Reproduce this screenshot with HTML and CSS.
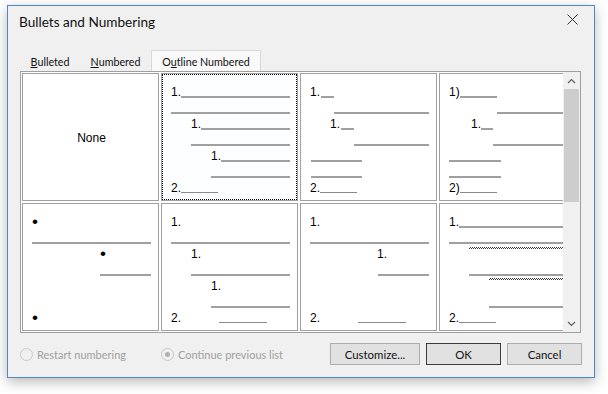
FILE: index.html
```html
<!DOCTYPE html>
<html>
<head>
<meta charset="utf-8">
<title>Bullets and Numbering</title>
<link rel="stylesheet" href="styles.css">
</head>
<body>
<div class="dialog">
  <div class="titlebar">
    <span class="title">Bullets and Numbering</span>
    <svg class="close" width="11" height="11" viewBox="0 0 11 11"><path d="M0.5 0.5 L10.5 10.5 M10.5 0.5 L0.5 10.5" stroke="#333" stroke-width="1" fill="none"/></svg>
  </div>
  <div class="tabs">
    <div class="tab t1"><u>B</u>ulleted</div>
    <div class="tab t2"><u>N</u>umbered</div>
    <div class="tab t3 active">O<u>u</u>tline Numbered</div>
  </div>
  <div class="panel">
    <div class="gallery">
      <div class="grid">
        <!-- row 1 -->
        <div class="cell none"><span class="none-text">None</span></div>
        <div class="cell selected">
          <div class="row"><span class="lbl">1.</span><span class="ln fill"></span></div>
          <div class="row"><span class="ln fill"></span></div>
          <div class="row i20"><span class="lbl">1.</span><span class="ln fill"></span></div>
          <div class="row i20"><span class="ln fill"></span></div>
          <div class="row i40"><span class="lbl">1.</span><span class="ln fill"></span></div>
          <div class="row i40"><span class="ln fill"></span></div>
          <div class="row"><span class="lbl">2.</span><span class="ln thin w37"></span></div>
        </div>
        <div class="cell">
          <div class="row"><span class="lbl">1.</span><span class="ln w13 ml1"></span></div>
          <div class="row i24"><span class="ln fill"></span></div>
          <div class="row i20"><span class="lbl">1.</span><span class="ln w13 ml1"></span></div>
          <div class="row i44"><span class="ln fill"></span></div>
          <div class="row i1"><span class="ln w51"></span></div>
          <div class="row i1"><span class="ln w51"></span></div>
          <div class="row"><span class="lbl">2.</span><span class="ln thin w37"></span></div>
        </div>
        <div class="cell">
          <div class="row"><span class="lbl">1)</span><span class="ln w37"></span></div>
          <div class="row i48"><span class="ln fill"></span></div>
          <div class="row i22"><span class="lbl">1.</span><span class="ln w12"></span></div>
          <div class="row i44"><span class="ln fill"></span></div>
          <div class="row"><span class="ln w52"></span></div>
          <div class="row"><span class="ln w52"></span></div>
          <div class="row"><span class="lbl">2)</span><span class="ln thin w37"></span></div>
        </div>
        <!-- row 2 -->
        <div class="cell">
          <div class="row"><span class="lbl bul">•</span></div>
          <div class="row"><span class="ln fill"></span></div>
          <div class="row i68"><span class="lbl bul">•</span></div>
          <div class="row i68"><span class="ln fill"></span></div>
          <div class="row"></div>
          <div class="row"></div>
          <div class="row"><span class="lbl bul">•</span></div>
        </div>
        <div class="cell">
          <div class="row"><span class="lbl">1.</span></div>
          <div class="row"><span class="ln fill"></span></div>
          <div class="row i20"><span class="lbl">1.</span></div>
          <div class="row i20"><span class="ln fill"></span></div>
          <div class="row i40"><span class="lbl">1.</span></div>
          <div class="row i40"><span class="ln fill"></span></div>
          <div class="row"><span class="lbl">2.</span><span class="ln thin w48 ml38"></span></div>
        </div>
        <div class="cell">
          <div class="row"><span class="lbl">1.</span></div>
          <div class="row"><span class="ln fill"></span></div>
          <div class="row i67"><span class="lbl">1.</span></div>
          <div class="row i68"><span class="ln fill"></span></div>
          <div class="row"></div>
          <div class="row"></div>
          <div class="row"><span class="lbl">2.</span><span class="ln thin w48 ml38"></span></div>
        </div>
        <div class="cell">
          <div class="row"><span class="lbl">1.</span><span class="ln fill"></span></div>
          <div class="row"><span class="ln fill"></span></div>
          <div class="row h5 i20"><span class="ln hatch fill"></span></div>
          <div class="row h11"></div>
          <div class="row i20"><span class="ln fill"></span></div>
          <div class="row h4 i40"><span class="ln hatch fill"></span></div>
          <div class="row h12"></div>
          <div class="row i40"><span class="ln fill"></span></div>
          <div class="row"><span class="lbl">2.</span><span class="ln thin w37"></span></div>
        </div>
      </div>
    </div>
    <div class="scrollbar">
      <div class="sb-btn"><svg width="9" height="6" viewBox="0 0 9 6"><path d="M1 5 L4.5 1.5 L8 5" stroke="#606060" stroke-width="1.2" fill="none"/></svg></div>
      <div class="sb-track"><div class="sb-thumb"></div></div>
      <div class="sb-btn"><svg width="9" height="6" viewBox="0 0 9 6"><path d="M1 1 L4.5 4.5 L8 1" stroke="#606060" stroke-width="1.2" fill="none"/></svg></div>
    </div>
  </div>
  <div class="footer">
    <div class="radio r1"><span class="circle"></span><span class="rlabel">Restart numbering</span></div>
    <div class="radio r2"><span class="circle checked"></span><span class="rlabel">Continue previous list</span></div>
    <button class="btn customize">Customize...</button>
    <button class="btn ok">OK</button>
    <button class="btn cancel">Cancel</button>
  </div>
</div>
</body>
</html>
```

FILE: styles.css
```css
html, body {
  margin: 0;
  padding: 0;
  background: #ffffff;
}

body {
  width: 608px;
  height: 394px;
  overflow: hidden;
  font-family: "Lato", "Liberation Sans", sans-serif;
}

.dialog {
  margin: 5px 0 0 7px;
  width: 586px;
  height: 371px;
  border: 1px solid #4a8bc6;
  background: #f0f0f0;
  box-shadow: 0 4px 12px rgba(0, 0, 0, 0.28);
  display: flex;
  flex-direction: column;
}

.titlebar {
  height: 30px;
  display: flex;
  align-items: center;
  padding: 0 16px 0 11px;
}

.title {
  flex: 1;
  font-size: 13.6px;
  color: #111;
  padding-top: 1px;
}

.close {
  display: block;
  margin-top: -3px;
}

.tabs {
  margin: 14px 0 0 12px;
  height: 21px;
  display: flex;
  align-items: stretch;
}

.tab {
  font-size: 10.7px;
  color: #111;
  display: flex;
  align-items: center;
  justify-content: center;
  box-sizing: border-box;
  padding-top: 1px;
}

.tab u {
  text-underline-offset: 1px;
}

.t1 { width: 60px; }
.t2 { width: 71px; }
.t3 { width: 110px; }

.tab.active {
  border: 1px solid #d9d9d9;
  border-bottom: none;
  background: #f9f9f9;
}

.panel {
  margin: 0 13px 0 12px;
  height: 262px;
  box-sizing: border-box;
  border: 1px solid #a0a0a0;
  background: #ffffff;
  display: flex;
}

.gallery {
  flex: 1;
  overflow: hidden;
  padding: 1px 0 0 1px;
}

.grid {
  display: grid;
  grid-template-columns: repeat(4, 137px);
  grid-template-rows: repeat(2, 128px);
  gap: 2px;
}

.cell {
  box-sizing: border-box;
  border: 1px solid #a0a0a0;
  padding: 9px 7px 0 9px;
  background: #ffffff;
  overflow: hidden;
}

.cell.selected {
  outline: 1px dotted #000;
  outline-offset: -2px;
  background: #fdfeff;
}

.cell.none {
  display: flex;
  align-items: center;
  justify-content: center;
  padding: 1px 0 0 2px;
}

.none-text {
  font-family: "Liberation Sans", Arial, sans-serif;
  font-size: 12px;
  color: #000;
}

.row {
  height: 16px;
  display: flex;
  align-items: flex-end;
}

.row.h4 { height: 4px; }
.row.h5 { height: 5px; }
.row.h11 { height: 11px; }
.row.h12 { height: 12px; }

.i1 { padding-left: 1px; }
.i20 { padding-left: 20px; }
.i22 { padding-left: 22px; }
.i24 { padding-left: 24px; }
.i40 { padding-left: 40px; }
.i44 { padding-left: 44px; }
.i48 { padding-left: 48px; }
.i67 { padding-left: 67px; }
.i68 { padding-left: 68px; }

.lbl {
  font-family: "Liberation Sans", Arial, sans-serif;
  font-size: 12px;
  line-height: 12px;
  color: #000;
  margin-bottom: 1px;
  white-space: pre;
}

.lbl.bul {
  font-size: 17px;
  line-height: 14px;
  margin-bottom: 0;
}

.ln {
  display: block;
  height: 2px;
  background: #a0a0a0;
  margin-bottom: 1px;
}

.ln.fill { flex: 1; }
.ln.thin {
  height: 1px;
  background: #8a8a8a;
  margin-bottom: 2px;
}

.ln.hatch {
  background: repeating-conic-gradient(#3a3a3a 0 25%, #ffffff 0 50%) 0 0 / 2px 2px;
}

.w12 { width: 12px; }
.w13 { width: 13px; }
.w37 { width: 37px; }
.w48 { width: 48px; }
.w51 { width: 51px; }
.w52 { width: 52px; }
.ml1 { margin-left: 1px; }
.ml38 { margin-left: 38px; }

.scrollbar {
  width: 17px;
  background: #f0f0f0;
  display: flex;
  flex-direction: column;
}

.sb-btn {
  height: 17px;
  display: flex;
  align-items: center;
  justify-content: center;
}

.sb-track {
  flex: 1;
  padding: 0 1px;
}

.sb-thumb {
  height: 113px;
  background: #cdcdcd;
}

.footer {
  margin-top: 10px;
  height: 22px;
  display: flex;
  align-items: center;
  padding: 0 12px;
}

.radio {
  display: flex;
  align-items: center;
  font-size: 11px;
  color: #a0a0a0;
}

.r1 { width: 141px; }
.r2 { flex: 1; }

.circle {
  width: 11px;
  height: 11px;
  border: 1px solid #c8c8c8;
  border-radius: 50%;
  background: #f0f0f0;
  margin-right: 4px;
  display: flex;
  align-items: center;
  justify-content: center;
}

.circle.checked::after {
  content: "";
  width: 5px;
  height: 5px;
  border-radius: 50%;
  background: #b0b0b0;
}

.btn {
  height: 22px;
  box-sizing: border-box;
  border: 1px solid #adadad;
  background: #e1e1e1;
  font-family: "Lato", "Liberation Sans", sans-serif;
  font-size: 11.4px;
  color: #111;
  padding: 0;
  margin: 0 0 0 6px;
}

.customize { width: 90px; }
.ok { width: 75px; border-color: #3c3c3c; }
.cancel { width: 75px; }
```
